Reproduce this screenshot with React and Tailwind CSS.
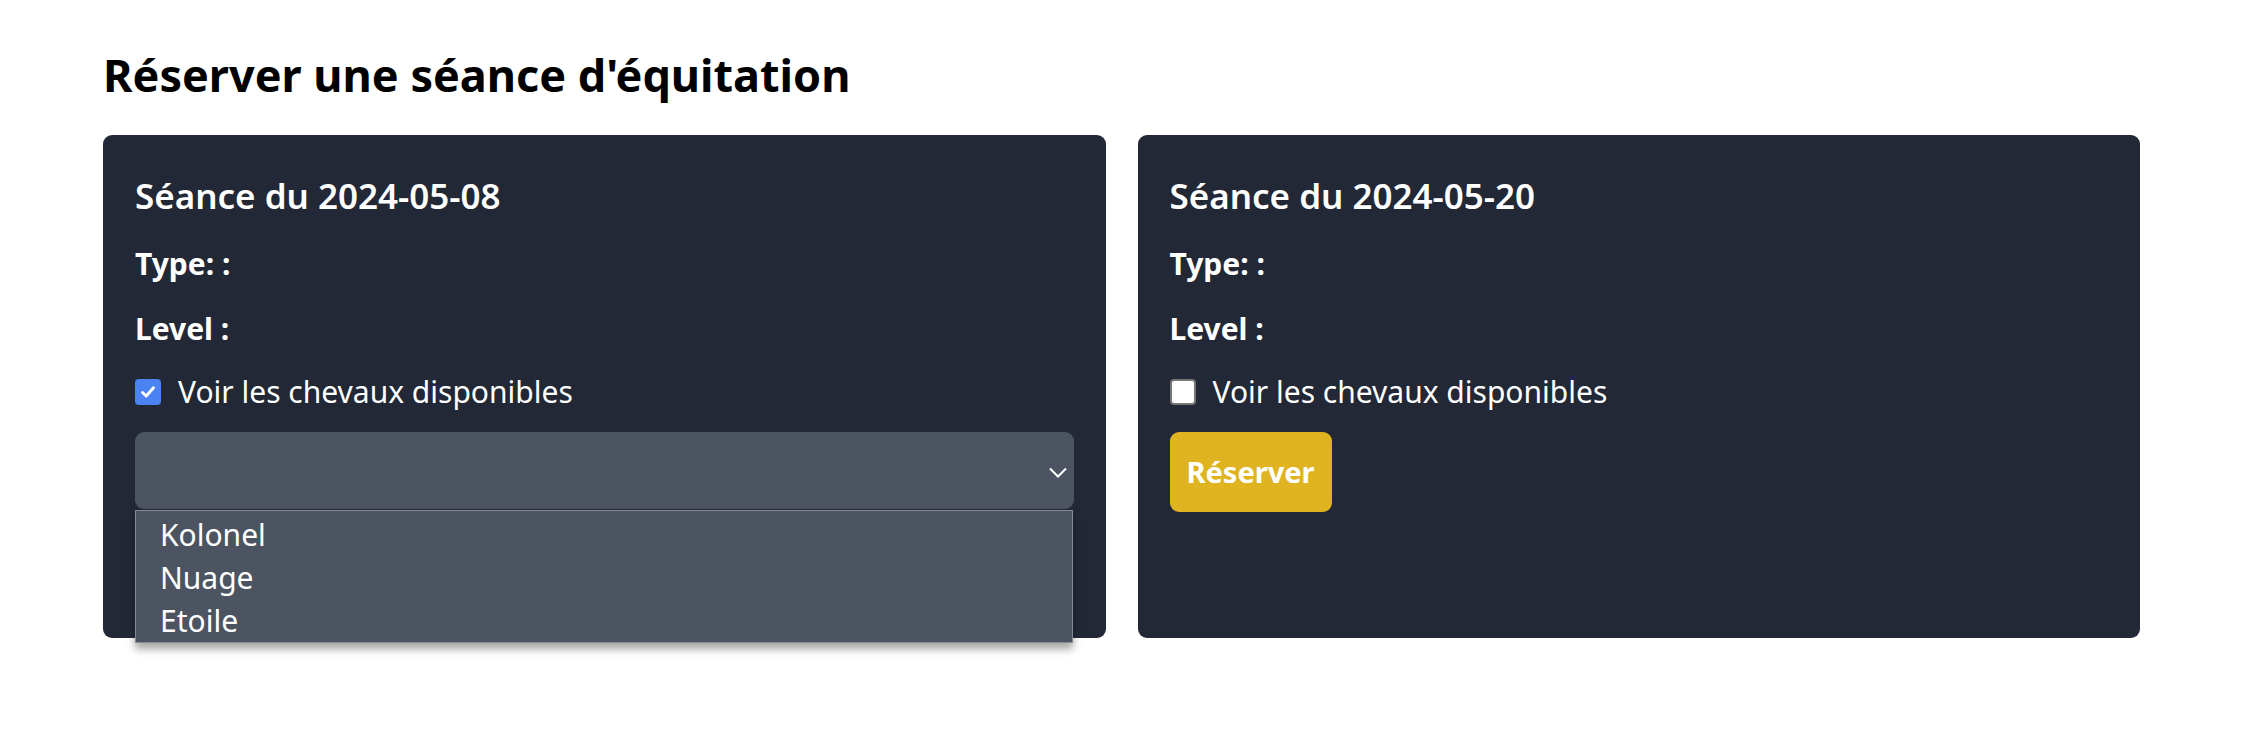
import { useState } from 'react';

const sessions = [
  { id: 1, date: '2024-05-08', showHorses: true },
  { id: 2, date: '2024-05-20', showHorses: false },
];

const horses = ['Kolonel', 'Nuage', 'Etoile'];

const Checkbox = ({ checked }) =>
  checked ? (
    <span className="w-[26px] h-[26px] rounded-[4px] bg-[#4b83f3] flex items-center justify-center shrink-0">
      <svg width="18" height="18" viewBox="0 0 18 18" fill="none">
        <path d="M3.5 9.5 L7.2 13 L14.5 4.8" stroke="white" strokeWidth="3" strokeLinecap="round" strokeLinejoin="round" />
      </svg>
    </span>
  ) : (
    <span className="w-[26px] h-[26px] rounded-[4px] bg-white border-2 border-[#767676] shrink-0" />
  );

const SessionCard = ({ session }) => {
  const [open] = useState(session.showHorses);

  return (
    <div className="bg-[#222836] rounded-[9px] px-[32px] pt-[32px] min-h-[503px] text-white">
      <h2 className="text-[35px] leading-[58px] font-semibold">Séance du {session.date}</h2>
      <p className="mt-[6px] text-[30px] leading-[65px] font-bold">Type: :</p>
      <p className="text-[30px] leading-[65px] font-bold">Level :</p>
      <label className="mt-[8px] flex items-center gap-[17px] text-[30px] leading-[45px]">
        <Checkbox checked={session.showHorses} />
        <span>Voir les chevaux disponibles</span>
      </label>

      {open ? (
        <div className="relative mt-[18px]">
          <div className="h-[77px] rounded-[9px] bg-[#4d5461] flex items-center justify-end pr-[7px]">
            <svg width="18" height="11" viewBox="0 0 18 11" fill="none" className="mt-[3px]">
              <path d="M1 1.5 L9 9.5 L17 1.5" stroke="white" strokeWidth="2" />
            </svg>
          </div>
          {/* native select popup */}
          <ul className="absolute left-0 right-[1px] top-[78px] bg-[#4d5461] border border-[#858a93] pt-[2px] shadow-[0_6px_8px_rgba(0,0,0,0.35)] z-10">
            {horses.map((h) => (
              <li key={h} className="pl-[24px] text-[30px] leading-[43px] text-white">
                {h}
              </li>
            ))}
          </ul>
        </div>
      ) : (
        <button className="mt-[18px] w-[162px] h-[80px] rounded-[9px] bg-[#e0b320] text-white text-[29px] font-bold">
          Réserver
        </button>
      )}
    </div>
  );
};

export default function App() {
  return (
    <div className="min-h-screen bg-white pt-[45px] pl-[103px] font-['Noto_Sans',sans-serif]">
      <h1 className="text-[45px] leading-[60px] font-bold text-black mb-[30px]">
        Réserver une séance d'équitation
      </h1>
      <div className="grid grid-cols-2 gap-[32px] w-[2037px]">
        {sessions.map((s) => (
          <SessionCard key={s.id} session={s} />
        ))}
      </div>
    </div>
  );
}
